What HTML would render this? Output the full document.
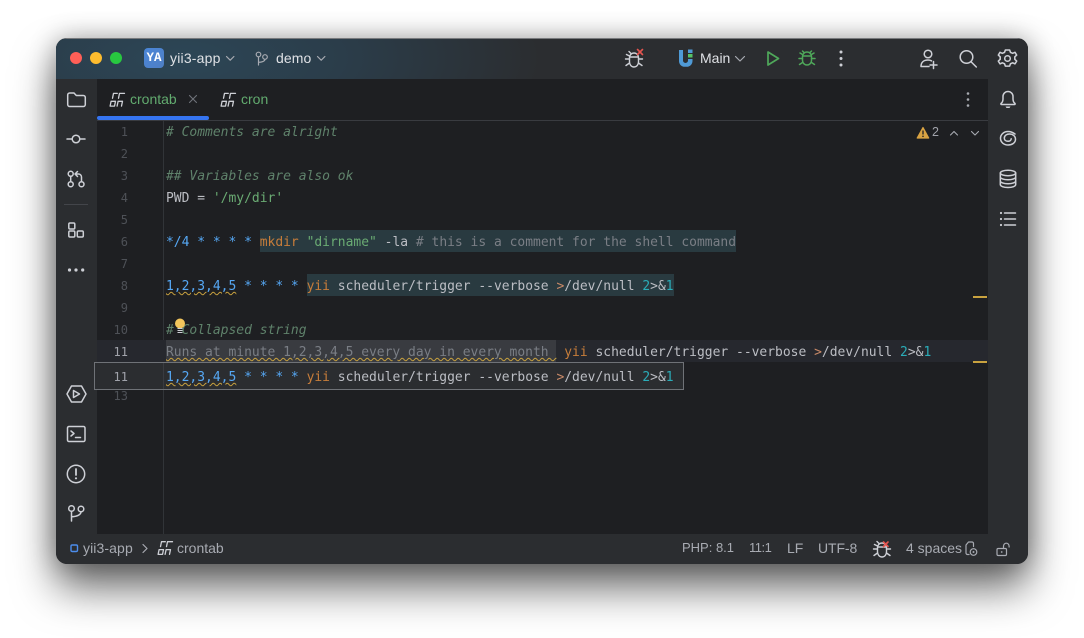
<!DOCTYPE html>
<html>
<head>
<meta charset="utf-8">
<style>
html,body{margin:0;padding:0;width:1084px;height:638px;background:#fff;overflow:hidden}
#win{position:absolute;left:56px;top:38px;width:972px;height:526px;border-radius:11px;background:#1e1f22;box-shadow:0 24px 42px rgba(0,0,0,.58),0 0 26px rgba(0,0,0,.3);}
#clip{position:absolute;inset:0;border-radius:11px;overflow:hidden}
.abs{position:absolute}
#page{position:absolute;left:0;top:0;width:1084px;height:638px;filter:blur(.25px)}
.ui{position:absolute;font:14px/20px "Liberation Sans",sans-serif;white-space:pre}
.c{position:absolute;left:166px;font:12.97px/26px "DejaVu Sans Mono","Liberation Mono",monospace;white-space:pre;color:#bcbec4;height:22px}
.n{position:absolute;width:40px;left:88px;text-align:right;font:12px/24px "DejaVu Sans Mono","Liberation Mono",monospace;color:#4e5157}
.cm{color:#5f826b;font-style:italic}
.st{color:#6aab73}
.bl{color:#56a8f5}
.or{color:#c77d3a}
.op{color:#c98a68}
.te{color:#2aacb8}
.gr{color:#7a7e85}
.hl{background:#293a40;display:inline-block;height:22px}
.wv{text-decoration:underline wavy #c9a23f 1px;text-underline-offset:1px}
svg{position:absolute;left:0;top:0}
svg .s{fill:none;stroke:#ced0d6;stroke-width:1.5;stroke-linecap:round;stroke-linejoin:round}
svg .g{fill:none;stroke:#4fa85a;stroke-width:1.5;stroke-linecap:round;stroke-linejoin:round}
svg .d{fill:none;stroke:#a8abb2;stroke-width:1.2;stroke-linecap:round;stroke-linejoin:round}
svg .r{fill:none;stroke:#e5544f;stroke-width:1.6;stroke-linecap:round}
</style>
</head>
<body>
<div id="win"><div id="clip">
  <div class="abs" style="left:0;top:0;width:972px;height:41px;background:radial-gradient(ellipse 360px 130px at 125px 20px,#2c4656 0%,#2b3d4a 45%,#2b2d30 100%),#2b2d30"></div>
  <div class="abs" style="left:0;top:0;width:972px;height:1px;background:#77797c"></div>
  <div class="abs" style="left:0;top:41px;width:41px;height:455px;background:#2b2d30"></div>
  <div class="abs" style="left:932px;top:41px;width:40px;height:455px;background:#2b2d30"></div>
  <div class="abs" style="left:0;top:496px;width:972px;height:30px;background:#2b2d30"></div>
</div></div>

<div id="page">
  <div class="abs" style="left:97px;top:120px;width:891px;height:1px;background:#393b40"></div>
  <div class="abs" style="left:97px;top:116px;width:112px;height:4px;background:#3574f0;border-radius:2px"></div>
  <div class="abs" style="left:163px;top:121px;width:1px;height:413px;background:#313438"></div>
  <div class="abs" style="left:97px;top:340px;width:891px;height:22px;background:#26282e"></div>
  <div class="abs" style="left:973px;top:296px;width:14px;height:2px;background:#c9a23f"></div>
  <div class="abs" style="left:973px;top:361px;width:14px;height:2px;background:#c9a23f"></div>

  <div class="n" style="top:120px">1</div>
  <div class="n" style="top:142px">2</div>
  <div class="n" style="top:164px">3</div>
  <div class="n" style="top:186px">4</div>
  <div class="n" style="top:208px">5</div>
  <div class="n" style="top:230px">6</div>
  <div class="n" style="top:252px">7</div>
  <div class="n" style="top:274px">8</div>
  <div class="n" style="top:296px">9</div>
  <div class="n" style="top:318px">10</div>
  <div class="n" style="top:340px;color:#a1a3ab">11</div>
  <div class="n" style="top:384px">13</div>

  <div class="c cm" style="top:120px"># Comments are alright</div>
  <div class="c cm" style="top:164px">## Variables are also ok</div>
  <div class="c" style="top:186px">PWD = <span class="st">'/my/dir'</span></div>
  <div class="c" style="top:230px"><span class="bl">*/4 * * * * </span><span class="hl"><span class="or">mkdir</span> <span class="st">"dirname"</span> -la <span class="gr"># this is a comment for the shell command</span></span></div>
  <div class="c" style="top:274px"><span class="bl wv">1,2,3,4,5</span><span class="bl"> * * * * </span><span class="hl"><span class="or">yii</span> scheduler/trigger --verbose <span class="op">&gt;</span>/dev/null <span class="te">2</span>&gt;&amp;<span class="te">1</span></span></div>
  <div class="c cm" style="top:318px"># Collapsed string</div>
  <div class="c" style="top:340px"><span style="background:#393b40;display:inline-block;height:22px;color:#7a7e85"><span class="wv">Runs at minute 1,2,3,4,5 every day in every month </span></span> <span class="or">yii</span> scheduler/trigger --verbose <span class="op">&gt;</span>/dev/null <span class="te">2</span>&gt;&amp;<span class="te">1</span></div>

  <div class="abs" style="left:94px;top:362px;width:588px;height:26px;border:1px solid #6f7277;background:#2b2d30"></div>
  <div class="abs" style="left:163px;top:363px;width:1px;height:26px;background:#393b40"></div>
  <div class="n" style="top:365px;color:#a1a3ab">11</div>
  <div class="c" style="top:365px"><span class="bl wv">1,2,3,4,5</span><span class="bl"> * * * * </span><span class="or">yii</span> scheduler/trigger --verbose <span class="op">&gt;</span>/dev/null <span class="te">2</span>&gt;&amp;<span class="te">1</span></div>

  <!-- title bar text -->
  <div class="abs" style="left:144px;top:48px;width:20px;height:20px;border-radius:4px;background:linear-gradient(135deg,#4a86d8,#4f7fc4);color:#fff;font:bold 12.5px/21px 'Liberation Mono',monospace;text-align:center">YA</div>
  <div class="ui" style="left:170px;top:48px;color:#dfe1e5;letter-spacing:.2px">yii3-app</div>
  <div class="ui" style="left:276px;top:48px;color:#dfe1e5;letter-spacing:.1px">demo</div>
  <div class="ui" style="left:700px;top:48px;color:#dfe1e5">Main</div>
  <!-- tabs -->
  <div class="ui" style="left:130px;top:89px;color:#62ab6f">crontab</div>
  <div class="ui" style="left:241px;top:89px;color:#62ab6f">cron</div>
  <div class="ui" style="left:932px;top:122px;color:#a1a3ab;font-size:12.5px">2</div>
  <!-- status -->
  <div class="ui" style="left:83px;top:538px;color:#a8abb2;letter-spacing:.1px">yii3-app</div>
  <div class="ui" style="left:177px;top:538px;color:#a8abb2">crontab</div>
  <div class="ui" style="left:682px;top:538px;color:#a8abb2;font-size:13px">PHP: 8.1</div>
  <div class="ui" style="left:749px;top:538px;color:#a8abb2;font-size:13px;letter-spacing:-.5px">11:1</div>
  <div class="ui" style="left:787px;top:538px;color:#a8abb2">LF</div>
  <div class="ui" style="left:818px;top:538px;color:#a8abb2;letter-spacing:-.1px">UTF-8</div>
  <div class="ui" style="left:906px;top:538px;color:#a8abb2">4 spaces</div>

  <svg width="1084" height="638" viewBox="0 0 1084 638">
    <defs>
      <g id="cr" fill="none" stroke="#ced0d6" stroke-width="1.3" stroke-linejoin="round" stroke-linecap="round">
        <path d="M7.8 .7H4L3 5.6"/><path d="M9 5.6L10 .7H15"/>
        <path d="M.6 13.4L1.6 8.6H6L5 13.4Z"/><path d="M7.6 13.4L8.6 8.6H13L12 13.4"/>
      </g>
      <g id="bug" fill="none" stroke="#ced0d6" stroke-width="1.4" stroke-linecap="round" stroke-linejoin="round">
        <path d="M-4.5 -1.5a4.5 4.5 0 0 1 9 0V3a4.5 5 0 0 1-9 0Z"/>
        <path d="M-3-5.5l-2-2M-4.5 0h-4M4.5 0h4M-4.5 4l-3.5 2.5M4.5 4l3.5 2.5M-4.5-3l-3-1.500M-4 -2h8"/>
      </g>
    </defs>

    <!-- traffic lights -->
    <circle cx="76" cy="58" r="6" fill="#ff5f57"/>
    <circle cx="96" cy="58" r="6" fill="#febc2e"/>
    <circle cx="116" cy="58" r="6" fill="#28c840"/>

    <!-- title chevrons -->
    <path class="d" d="M226.500 56.500l3.700 3.700 3.700-3.700"/>
    <path class="d" d="M317.500 56.500l3.700 3.700 3.700-3.700"/>
    <path class="d" d="M735.500 56.500l4.500 4.500 4.500-4.500"/>
    <!-- branch -->
    <circle class="d" cx="258.500" cy="54.500" r="2.300"/>
    <circle class="d" cx="265" cy="57" r="2.300"/>
    <path class="d" d="M258.500 57v8M265 59.300c0 2-3.500 3-6.500 3"/>

    <!-- top bug with red x -->
    <use href="#bug" x="634" y="59"/>
    <path class="r" d="M637.500 49.500l5 5M642.500 49.500l-5 5"/>

    <!-- U logo -->
    <path d="M679 50h4v10.500a2.500 2.500 0 0 0 5 0V59h4.500v2a5.800 5.800 0 0 1-5.800 5.800h-2a5.700 5.700 0 0 1-5.700-5.800z" fill="#4f9ad6"/>
    <rect x="688" y="49.500" width="4.500" height="3.500" fill="#4f9ad6"/>
    <rect x="688" y="54" width="4.500" height="3.500" fill="#55c468"/>

    <!-- run / debug -->
    <path d="M768 52l10.500 6.500-10.500 6.500z" fill="none" stroke="#4fa85a" stroke-width="1.700" stroke-linejoin="round"/>
    <g class="g">
      <path d="M802.500 56.500a4.500 4.500 0 0 1 9 0v4a4.500 4.500 0 0 1-9 0z"/>
      <path d="M804 52.500l-1.500-1.500M810 52.500l1.500-1.500M802.500 58.500h-3.500M811.500 58.500h3.500M802.500 62.500l-3 2M811.500 62.500l3 2M802.500 54.500l-2.500-1.500M811.500 54.500l2.500-1.500M803 56h8"/>
    </g>
    <circle cx="841" cy="52" r="1.500" fill="#ced0d6"/><circle cx="841" cy="58.500" r="1.500" fill="#ced0d6"/><circle cx="841" cy="65" r="1.500" fill="#ced0d6"/>

    <!-- person add -->
    <circle class="s" cx="928" cy="54" r="3.800"/>
    <path class="s" d="M921 66.500c0-4 2.500-6.500 7-6.500 1.500 0 2.500.3 3.500.8M921 66.500h8M933.500 61.500v7M930 65h7"/>
    <!-- search -->
    <circle class="s" cx="966.500" cy="57" r="6.300"/>
    <path class="s" d="M971.300 62l5 5"/>
    <!-- settings gear -->
    <path class="s" style="stroke-width:1.85" d="M1005.500 49.500h5l1 2.800 2.600 1.100 2.700-1.200 2 3.300-2.200 2v3l2.200 2-2 3.300-2.700-1.200-2.600 1.100-1 2.800h-5l-1-2.800-2.600-1.100-2.700 1.200-2-3.300 2.200-2v-3l-2.200-2 2-3.300 2.700 1.200 2.600-1.100z" transform="translate(1007.500 58.500) scale(.85) translate(-1008 -59.500)"/>
    <circle class="s" cx="1007.500" cy="58.500" r="2.800"/>

    <!-- left toolbar -->
    <path class="s" d="M67.700 95a2 2 0 0 1 2-2h4.300l2.300 2.500h7a2 2 0 0 1 2 2v7a2 2 0 0 1-2 2h-13.600a2 2 0 0 1-2-2z"/>
    <circle class="s" cx="76" cy="139" r="3.800"/>
    <path class="s" d="M67 139h5M80 139h5"/>
    <circle class="s" cx="70.700" cy="173.800" r="2.500"/>
    <circle class="s" cx="70.700" cy="184.200" r="2.500"/>
    <circle class="s" cx="81.500" cy="184.200" r="2.500"/>
    <path class="s" d="M70.700 176.300v5.400M81.500 181.700v-4.700a3 3 0 0 0-3-3h-3M77.500 171.500l-2.500 2.500 2.500 2.500"/>
    <rect x="64" y="204" width="24" height="1" fill="#43454a"/>
    <rect class="s" x="68.800" y="223" width="6" height="6" rx="1.200"/>
    <rect class="s" x="68.800" y="231" width="6" height="6" rx="1.200"/>
    <rect class="s" x="77.300" y="231" width="6" height="6" rx="1.200"/>
    <circle cx="69.500" cy="270" r="1.600" fill="#ced0d6"/><circle cx="76" cy="270" r="1.600" fill="#ced0d6"/><circle cx="82.700" cy="270" r="1.600" fill="#ced0d6"/>

    <path class="s" d="M71.500 386h10l4.500 8-4.500 8h-10l-4.500-8z"/>
    <path class="s" d="M73.500 390.500l6 3.500-6 3.500z"/>
    <rect class="s" x="67.500" y="426.500" width="17.500" height="15" rx="1.500"/>
    <path class="s" d="M71 431l3 2.500-3 2.500M75.500 437.500h5"/>
    <circle class="s" cx="76" cy="474" r="8.700"/>
    <path d="M76 469v6" stroke="#ced0d6" stroke-width="1.800" stroke-linecap="round"/>
    <circle cx="76" cy="478.300" r="1.100" fill="#ced0d6"/>
    <circle class="s" cx="71.500" cy="508.500" r="2.800"/>
    <circle class="s" cx="81" cy="509" r="2.800"/>
    <path class="s" d="M71.500 511.300v9.700M81 511.800c0 3-4 4.700-9.500 5"/>

    <!-- right toolbar -->
    <path class="s" d="M1001 103.500c1.300-1 2-2.200 2-4.500v-2.500a5 5 0 0 1 10 0v2.500c0 2.300.7 3.500 2 4.500.4.500 0 1-.5 1h-13c-.5 0-.9-.5-.5-1z"/>
    <path d="M1005.500 106.500h5l-1 1.500h-3z" fill="#ced0d6"/>
    <path class="s" d="M1015 134c-2-1.500-4.500-2.500-7-2.500-4 0-7.500 2.800-7.500 6.800 0 4 3.500 6.700 7.700 6.700 3.700 0 7.300-2 7.300-5.700 0-3.300-2.800-5.300-6-5.300-2.700 0-5.200 1.500-5.200 4.100 0 2 1.700 3.200 3.700 3.200 1.700 0 3.200-1 3.200-2.500"/>
    <ellipse class="s" cx="1008" cy="173" rx="7.700" ry="2.700"/>
    <path class="s" d="M1000.300 173v11.500c0 1.700 3.400 3 7.700 3s7.700-1.300 7.700-3V173M1000.300 177c0 1.500 3.400 2.800 7.700 2.800s7.700-1.300 7.700-2.800M1000.300 181c0 1.500 3.400 2.800 7.700 2.800s7.700-1.300 7.700-2.800"/>
    <circle cx="1001" cy="213" r="1.100" fill="#ced0d6"/><circle cx="1001" cy="219" r="1.100" fill="#ced0d6"/><circle cx="1001" cy="225" r="1.100" fill="#ced0d6"/>
    <path class="s" d="M1004.500 213h11M1004.500 219h11M1004.500 225h11"/>

    <!-- tabs -->
    <use href="#cr" x="109.500" y="92.700"/>
    <path d="M189.500 95.500l7 7M196.500 95.500l-7 7" stroke="#6f737a" stroke-width="1.100" stroke-linecap="round"/>
    <use href="#cr" x="220.500" y="92.700"/>
    <circle cx="968" cy="93.500" r="1.300" fill="#a8abb2"/><circle cx="968" cy="99.500" r="1.300" fill="#a8abb2"/><circle cx="968" cy="105.500" r="1.300" fill="#a8abb2"/>

    <!-- warning -->
    <path d="M923 127.500l5.700 10.500h-11.500z" fill="#d9a343" stroke="#d9a343" stroke-width="1.200" stroke-linejoin="round"/>
    <path d="M923 130.500v4" stroke="#1e1f22" stroke-width="1.300"/>
    <circle cx="923" cy="136.300" r=".8" fill="#1e1f22"/>
    <path d="M950.500 135l3.500-3.500 3.500 3.500" fill="none" stroke="#a8abb2" stroke-width="1.100" stroke-linecap="round" stroke-linejoin="round"/>
    <path d="M971.500 131.500l3.500 3.500 3.500-3.500" fill="none" stroke="#a8abb2" stroke-width="1.100" stroke-linecap="round" stroke-linejoin="round"/>

    <!-- bulb -->
    <circle cx="180" cy="323.500" r="5" fill="#f2c55c"/>
    <path d="M177.500 328.500h5M177.500 330.500h5M177.500 332.500h5" stroke="#ced0d6" stroke-width=".9"/>

    <!-- status bar -->
    <rect x="71" y="545" width="6.500" height="6.500" rx="1.200" fill="none" stroke="#4c8dec" stroke-width="1.400"/>
    <path d="M143 544.500l4 4-4 4" fill="none" stroke="#a8abb2" stroke-width="1.200" stroke-linecap="round" stroke-linejoin="round"/>
    <use href="#cr" x="157.500" y="541"/>
    <use href="#bug" x="882" y="549"/>
    <path class="r" d="M883.500 542l4.500 4.500M888 542l-4.500 4.500"/>
    <path class="d" d="M966 553v-8l2.500-3h3.500a1.500 1.500 0 0 1 1.500 1.500v3M966 553a1.500 1.500 0 0 0 1.500 1.500h1.500"/>
    <circle class="d" cx="973.500" cy="552" r="3.300"/>
    <circle cx="973.500" cy="552" r="1" fill="#a8abb2"/>
    <rect class="d" x="997" y="548.500" width="9.500" height="7" rx="1.200"/>
    <path class="d" d="M1003.500 548.500v-2.500a2.800 2.800 0 0 1 5.600 0v1"/>
    <circle cx="1001.700" cy="552" r=".9" fill="#a8abb2"/>
  </svg>
</div>
</body>
</html>
